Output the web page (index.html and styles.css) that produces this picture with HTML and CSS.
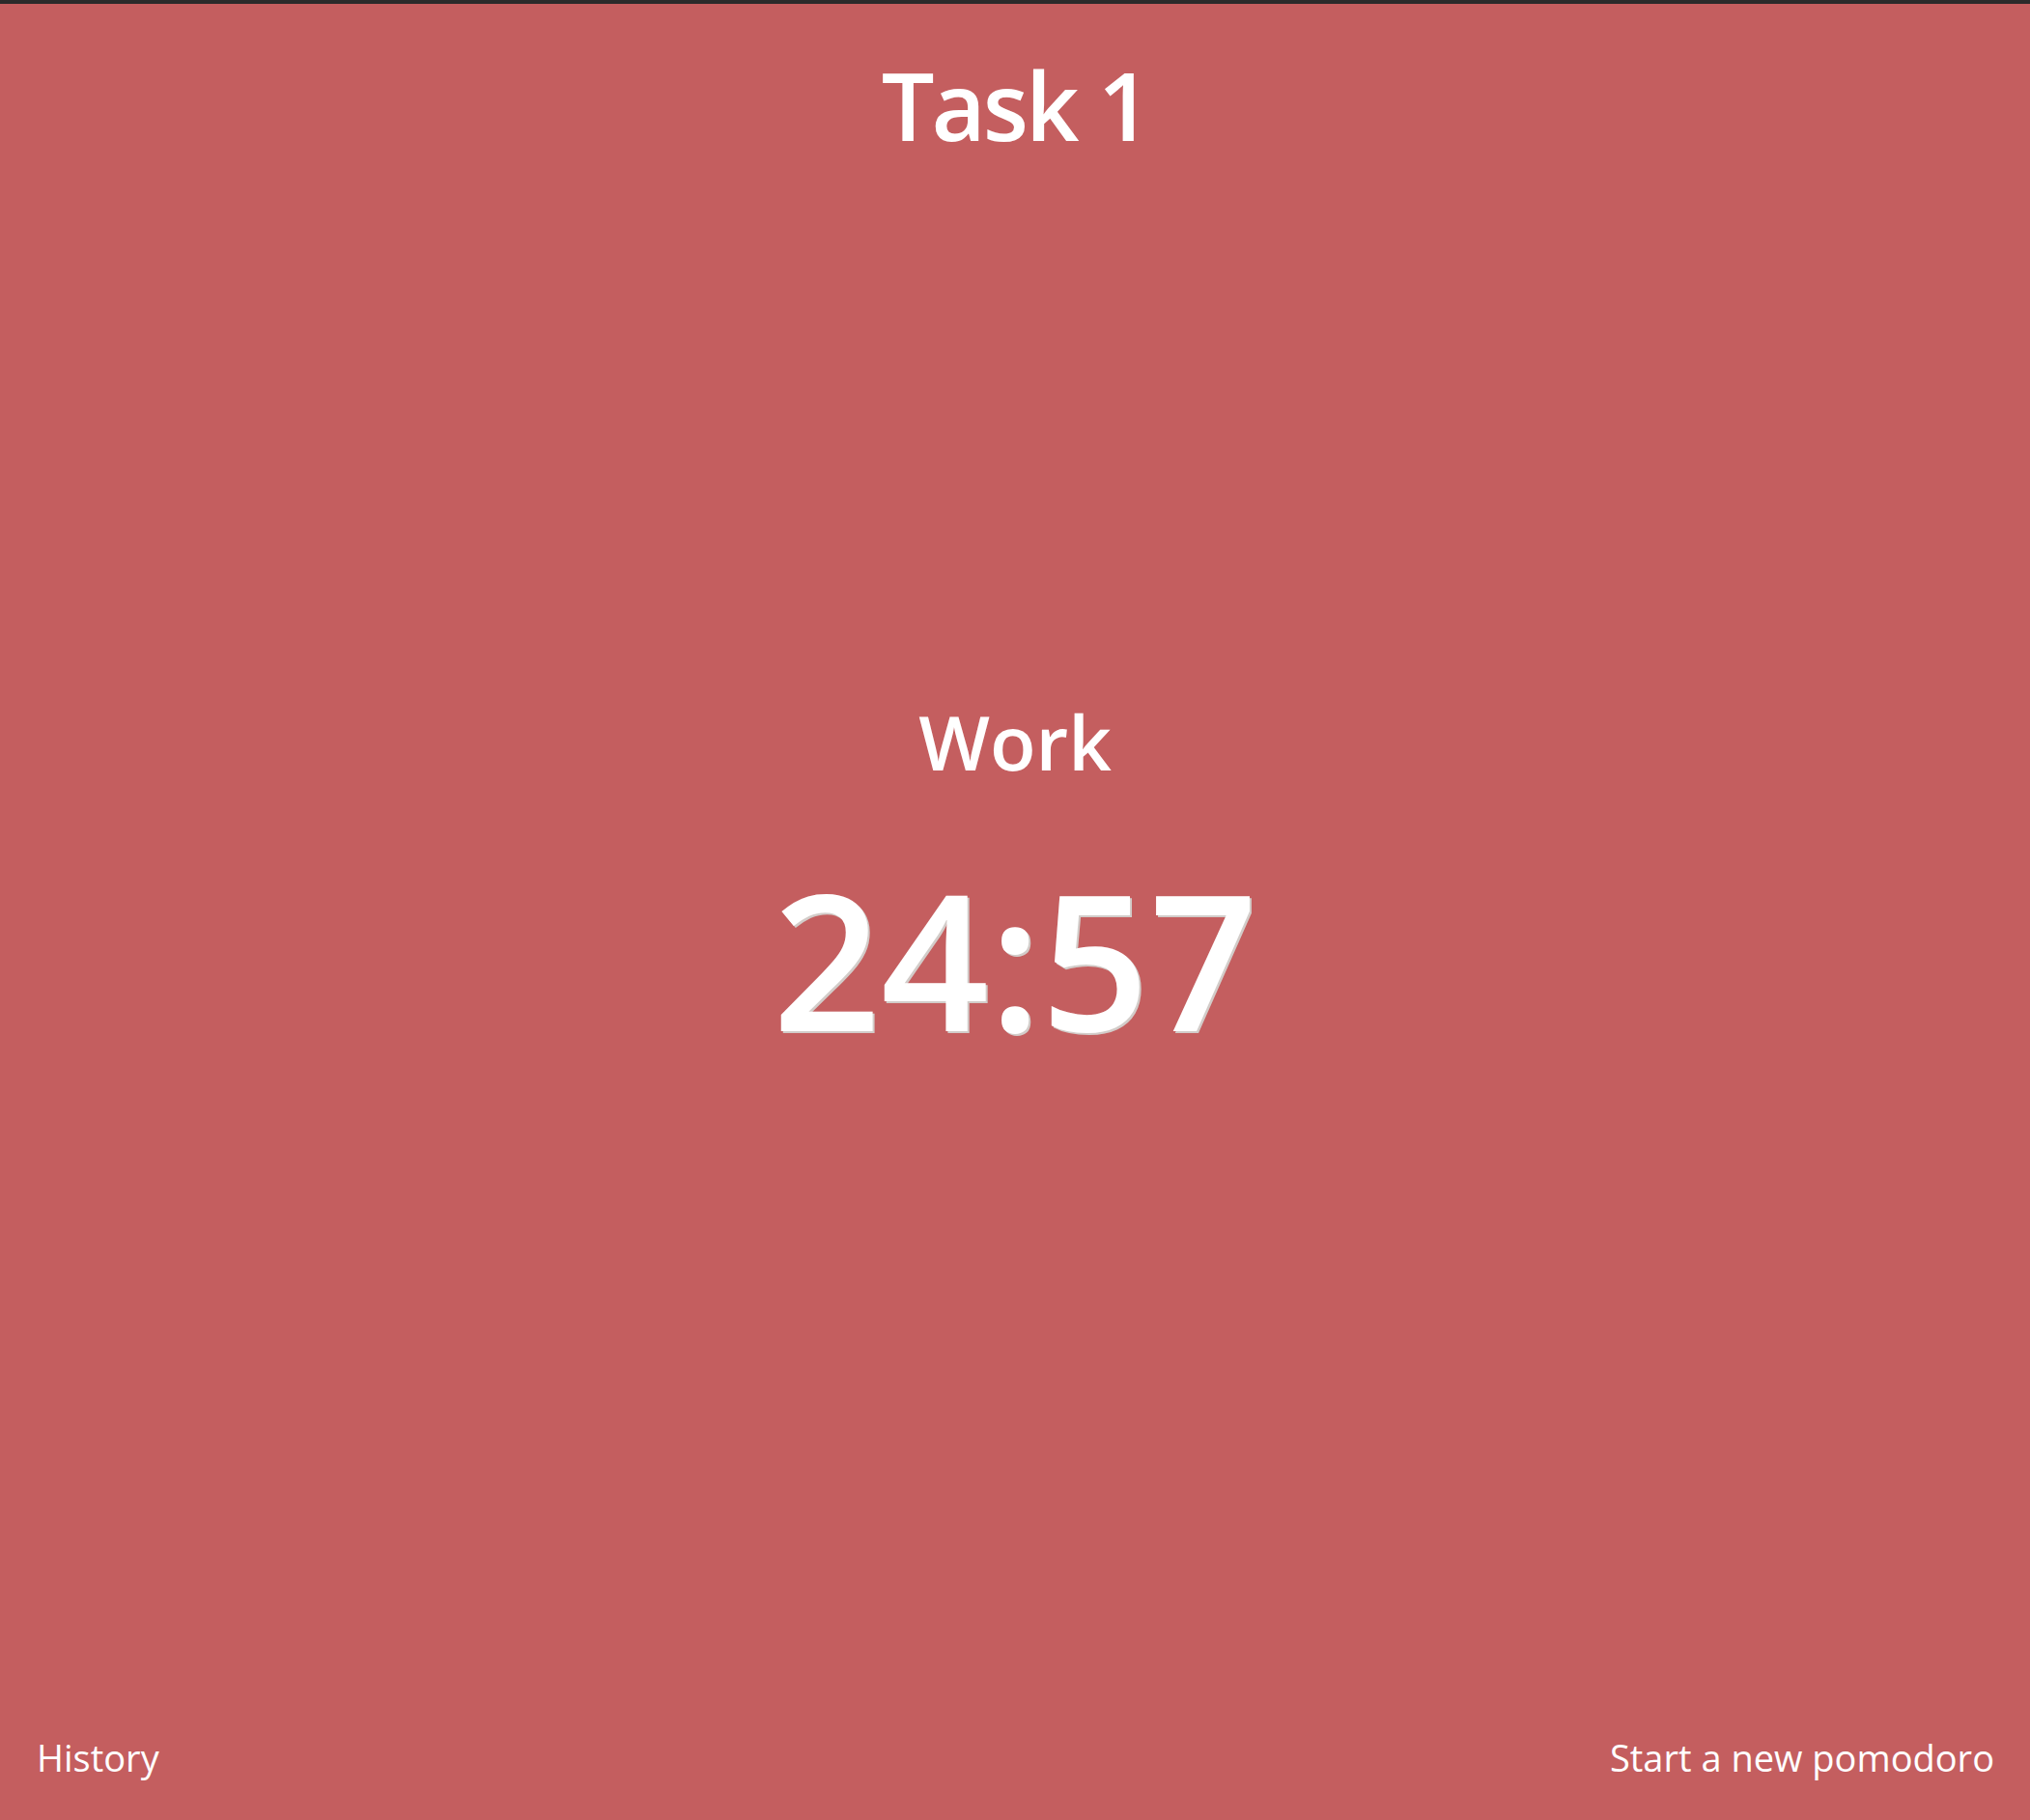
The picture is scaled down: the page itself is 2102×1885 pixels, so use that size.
FILE: index.html
```html
<!DOCTYPE html>
<html lang="en">
<head>
<meta charset="utf-8">
<title>Pomodoro</title>
<link rel="stylesheet" href="styles.css">
</head>
<body>
<div class="topbar"></div>
<main class="app">
  <header class="header">
    <h1 class="task-title">Task 1</h1>
  </header>
  <section class="timer">
    <div class="phase">Work</div>
    <div class="clock">24:57</div>
  </section>
  <footer class="footer">
    <a class="link" href="#">History</a>
    <a class="link" href="#">Start a new pomodoro</a>
  </footer>
</main>
</body>
</html>
```
FILE: styles.css
```css
html, body {
  margin: 0;
  padding: 0;
  height: 100%;
}
body {
  background: #c45e5f;
  font-family: "Open Sans", "Noto Sans", "Liberation Sans", sans-serif;
  color: #ffffff;
  display: flex;
  flex-direction: column;
}
.topbar {
  height: 4px;
  background: #2b2b2b;
  flex: none;
}
.app {
  flex: 1;
  display: flex;
  flex-direction: column;
}
.header {
  display: flex;
  justify-content: center;
  padding-top: 46px;
}
.task-title {
  margin: 0;
  font-size: 97px;
  font-weight: 600;
  letter-spacing: -3px;
  line-height: 1.2;
}
.timer {
  flex: 1;
  display: flex;
  flex-direction: column;
  align-items: center;
  justify-content: center;
  padding-bottom: 128px;
}
.phase {
  font-size: 78px;
  font-weight: 600;
  line-height: 1.2;
}
.clock {
  margin-top: 60px;
  font-size: 196px;
  font-weight: 600;
  line-height: 1.2;
  text-shadow: 2px 2px 0 #d2ccc9;
}
.footer {
  display: flex;
  justify-content: space-between;
  align-items: center;
  padding: 0 37px 39px 38px;
}
.link {
  color: #ffffff;
  text-decoration: none;
  font-size: 38px;
  font-weight: 400;
}
```
